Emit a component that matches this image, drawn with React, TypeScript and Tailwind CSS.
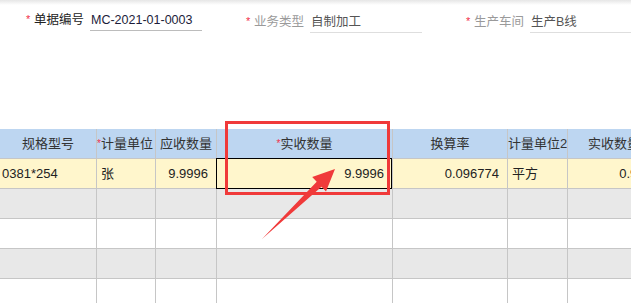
import React from "react";

interface Column {
  key: string;
  title: string;
  width: string;
  required?: boolean;
  headAlign: string;
  cellAlign: string;
}

const columns: Column[] = [
  { key: "spec", title: "规格型号", width: "w-[97px]", headAlign: "justify-center", cellAlign: "justify-start pl-[2px]" },
  { key: "unit", title: "计量单位", width: "w-[59px]", required: true, headAlign: "justify-start", cellAlign: "justify-start pl-[4px]" },
  { key: "due", title: "应收数量", width: "w-[61px]", headAlign: "justify-center", cellAlign: "justify-end pr-[8px]" },
  { key: "qty", title: "实收数量", width: "w-[176px]", required: true, headAlign: "justify-center", cellAlign: "justify-end pr-[8px]" },
  { key: "rate", title: "换算率", width: "w-[115px]", headAlign: "justify-center", cellAlign: "justify-end pr-[8px]" },
  { key: "unit2", title: "计量单位2", width: "w-[60px]", headAlign: "justify-center", cellAlign: "justify-start pl-[4px]" },
  { key: "qty2", title: "实收数量2", width: "w-[100px]", headAlign: "justify-center", cellAlign: "justify-end pr-[8px]" },
];

const row: Record<string, string> = {
  spec: "0381*254",
  unit: "张",
  due: "9.9996",
  qty: "9.9996",
  rate: "0.096774",
  unit2: "平方",
  qty2: "0.9677",
};

const Field = ({
  label,
  value,
  strong,
  top,
}: {
  label: string;
  value: string;
  strong?: boolean;
  top: string;
}) => (
  <div className={`flex items-center w-[176px] shrink-0 ${top}`}>
    <span className="w-[8px] text-[11px] text-[#f2304a] leading-none -mt-[3px]">*</span>
    <span className={`w-[56px] text-[12.5px] ${strong ? "text-[#222]" : "text-[#9a9a9a]"}`}>
      {label}
    </span>
    <div
      className={`w-[112px] h-[21px] flex items-center pl-[1px] border-b text-[12.5px] ${
        strong ? "border-[#bcbcbc] text-[#1c1c3a]" : "border-[#dedede] text-[#555]"
      }`}
    >
      {value}
    </div>
  </div>
);

const App = () => {
  const rowBg = ["bg-[#e8e8e8]", "bg-white", "bg-[#e8e8e8]", "bg-white"];

  return (
    <div className="relative w-[631px] h-[303px] overflow-hidden bg-white font-['Liberation_Sans','Noto_Sans_CJK_SC',sans-serif]">
      <div className="h-[5px] bg-gradient-to-b from-[#e6e6e6] to-white" />

      {/* header form */}
      <div className="h-[124px] flex gap-[44px] pl-[26px]">
        <Field label="单据编号" value="MC-2021-01-0003" strong top="mt-[5px] self-start" />
        <Field label="业务类型" value="自制加工" top="mt-[7px] self-start" />
        <Field label="生产车间" value="生产B线" top="mt-[7px] self-start" />
      </div>

      {/* grid */}
      <div className="w-[631px] overflow-hidden text-[13px] text-[#222]">
        <div className="flex w-max h-[30px] bg-[#bdd6f1] border-b border-[#c6c6c6]">
          {columns.map((c) => (
            <div
              key={c.key}
              className={`${c.width} shrink-0 flex items-center ${c.headAlign} border-r border-[#c6c6c6] text-[#333] whitespace-nowrap overflow-hidden`}
            >
              {c.required && <span className="text-[10px] text-[#f2304a] self-start mt-[7px]">*</span>}
              {c.title}
            </div>
          ))}
        </div>

        <div className="flex w-max h-[30px] bg-[#fff6cc] border-b border-[#c6c6c6]">
          {columns.map((c) => (
            <div
              key={c.key}
              className={`relative ${c.width} shrink-0 flex items-center ${c.cellAlign} border-r border-[#c6c6c6] whitespace-nowrap`}
            >
              {c.key === "qty" && (
                <div className="absolute -left-px -top-px right-0 -bottom-px border border-black" />
              )}
              <span className="relative">{row[c.key]}</span>
            </div>
          ))}
        </div>

        {rowBg.map((bg, i) => (
          <div key={i} className={`flex w-max h-[30px] ${bg} border-b border-[#c6c6c6]`}>
            {columns.map((c) => (
              <div key={c.key} className={`${c.width} shrink-0 border-r border-[#c6c6c6]`} />
            ))}
          </div>
        ))}
      </div>

      {/* annotation */}
      <div className="absolute left-[225px] top-[121px] w-[165px] h-[74px] border-[3px] border-[#f03a3a]" />
      <svg className="absolute left-0 top-0" width="631" height="303" viewBox="0 0 631 303">
        <polygon
          points="262,239 321.5,186.7 326,191.4 335,169 312.2,177 316.7,181.7"
          fill="#f03a3a"
        />
      </svg>
    </div>
  );
};

export default App;
